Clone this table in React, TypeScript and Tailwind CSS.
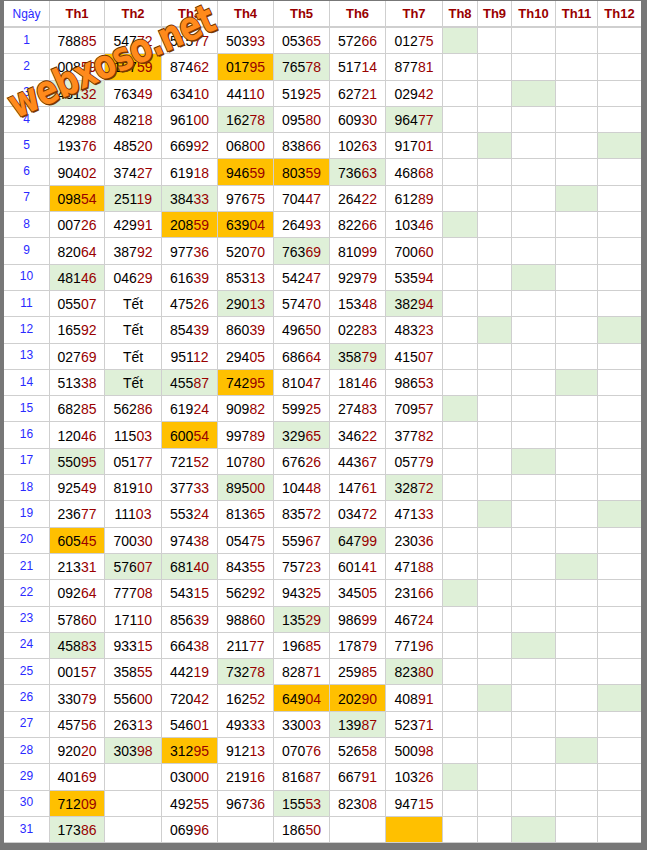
import React from "react";

const COLS = "45px 54px 56px 55px 55px 55px 55px 56px 34px 33px 43px 41px 43px";

const DATA: string[] = [
  "78885|54772|51577|50393|05365|57266|01275",
  "00859|*15759|87462|*01795|+76578|51714|87781",
  "+43132|76349|63410|44110|51925|62721|02942",
  "42988|48218|96100|+16278|09580|60930|+96477",
  "19376|48520|66992|06800|83866|10263|91701",
  "90402|37427|61918|*94659|*80359|+73663|46868",
  "*09854|+25119|+38433|97675|70447|26422|61289",
  "00726|42991|*20859|*63904|26493|82266|10346",
  "82064|38792|97736|52070|+76369|81099|70060",
  "+48146|04629|61639|85313|54247|92979|53594",
  "05507|Tết|47526|+29013|57470|15348|+38294",
  "16592|Tết|85439|86039|49650|02283|48323",
  "02769|Tết|95112|29405|68664|+35879|41507",
  "51338|+Tết|+45587|*74295|81047|18146|98653",
  "68285|56286|61924|90982|59925|27483|70957",
  "12046|11503|*60054|99789|+32965|34622|37782",
  "+55095|05177|72152|10780|67626|44367|05779",
  "92549|81910|37733|+89500|10448|14761|+32872",
  "23677|11103|55324|81365|83572|03472|47133",
  "*60545|70030|97438|05475|55967|+64799|23036",
  "21331|+57607|+68140|84355|75723|60141|47188",
  "09264|77708|54315|56292|94325|34505|23166",
  "57860|17110|85639|98860|+13529|98699|46724",
  "+45883|93315|66438|21177|19685|17879|77196",
  "00157|35855|44219|+73278|82871|25985|+82380",
  "33079|55600|72042|16252|*64904|*20290|40891",
  "45756|26313|54601|49333|33003|+13987|52371",
  "92020|+30398|*31295|91213|07076|52658|50098",
  "40169||03000|21916|81687|66791|10326",
  "*71209||49255|96736|+15553|82308|94715",
  "+17386||06996||18650||*",
];

const EXTRA: number[][] = [[0], [], [2], [], [1, 4], [], [3]];

function Value({ v }: { v: string }) {
  if (/^\d{5}$/.test(v)) {
    return (
      <span>
        <span className="text-black">{v.slice(0, 3)}</span>
        <span className="text-[#990000]">{v.slice(3)}</span>
      </span>
    );
  }
  return <span className="text-black">{v}</span>;
}

export default function App() {
  const headers = ["Th1", "Th2", "Th3", "Th4", "Th5", "Th6", "Th7", "Th8", "Th9", "Th10", "Th11", "Th12"];
  return (
    <div
      className="relative w-[647px] h-[850px] overflow-hidden bg-[#777777] pt-px pl-1 pr-[6px]"
      style={{ fontFamily: '"Liberation Sans", Arial, sans-serif' }}
    >
      <div className="bg-[#cfcfcf] pb-px">
        <div className="grid gap-x-px pb-[2px]" style={{ gridTemplateColumns: COLS, gridTemplateRows: "25px" }}>
          <div className="bg-white flex items-center justify-center text-[12px] text-[#2a2aff]">Ngày</div>
          {headers.map((h) => (
            <div key={h} className="bg-white flex items-center justify-center text-[13px] font-bold text-[#990000]">
              {h}
            </div>
          ))}
        </div>
        <div
          className="grid gap-px"
          style={{ gridTemplateColumns: COLS, gridTemplateRows: "repeat(31, 25.3px)" }}
        >
          {DATA.map((row, i) => {
            const cells = row.split("|");
            const extra = EXTRA[i % 7];
            return (
              <React.Fragment key={i}>
                <div className="bg-white flex items-center justify-center pb-[2px] text-[12px] text-[#2a2aff]">
                  {i + 1}
                </div>
                {cells.map((c, j) => {
                  let bg = "bg-white";
                  let v = c;
                  if (c.startsWith("*")) {
                    bg = "bg-[#ffc000]";
                    v = c.slice(1);
                  } else if (c.startsWith("+")) {
                    bg = "bg-[#dff0d8]";
                    v = c.slice(1);
                  }
                  return (
                    <div key={j} className={`${bg} flex items-center justify-center pt-[2px] text-[14px]`}>
                      <Value v={v} />
                    </div>
                  );
                })}
                {[0, 1, 2, 3, 4].map((k) => (
                  <div key={"e" + k} className={extra.includes(k) ? "bg-[#dff0d8]" : "bg-white"} />
                ))}
              </React.Fragment>
            );
          })}
        </div>
      </div>
      <div
        className="pointer-events-none absolute left-[111px] top-[61px] whitespace-nowrap text-[40px] font-bold leading-none tracking-[-1px] text-[#ff8a1c] [-webkit-text-stroke:2px_#6e3300] [paint-order:stroke_fill] [text-shadow:1px_2px_0_#7a3a00] [transform:translate(-50%,-50%)_rotate(-24deg)_scaleX(0.8)]"
        style={{ fontFamily: '"DejaVu Sans", sans-serif' }}
      >
        webxoso.net
      </div>
    </div>
  );
}
